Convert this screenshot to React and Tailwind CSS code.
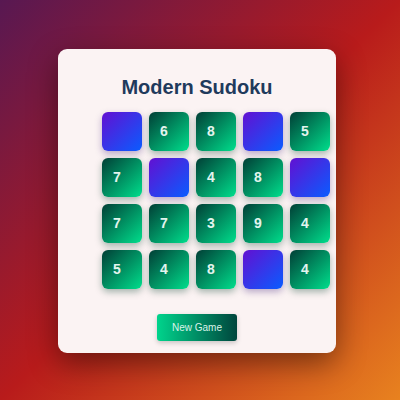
import React from "react";

const cells = [
  "", "6", "8", "", "5",
  "7", "", "4", "8", "",
  "7", "7", "3", "9", "4",
  "5", "4", "8", "", "4",
];

export default function App() {
  return (
    <div
      className="w-[400px] h-[400px] flex items-start justify-start bg-linear-to-br/srgb from-[#581852] via-[#b81b1b] to-[#e8821f]"
      style={{ fontFamily: '"Liberation Sans", Arial, sans-serif' }}
    >
      <div className="ml-[58px] mt-[49px] w-[278px] h-[304px] rounded-[9px] bg-[#fbf3f3] shadow-[0_10px_30px_rgba(0,0,0,0.45)] flex flex-col items-center pt-[24px]">
        <h1 className="text-[20px] leading-[28px] font-bold text-[#1f3a5c]">Modern Sudoku</h1>
        <div className="self-start ml-[44px] mt-[11px] grid grid-cols-[repeat(5,40px)] gap-x-[7px] gap-y-[7px]">
          {cells.map((v, i) =>
            v === "" ? (
              <div
                key={i}
                className="w-[40px] h-[39px] rounded-[6px] bg-linear-to-br/srgb from-[#6210d2] to-[#0a5cff] shadow-[0_3px_7px_rgba(60,30,120,0.35)]"
              />
            ) : (
              <div
                key={i}
                className="w-[40px] h-[39px] rounded-[6px] bg-linear-to-br/srgb from-[#013f36] to-[#00de8c] shadow-[0_3px_7px_rgba(0,60,40,0.35)] flex items-center justify-center pr-[10px] text-[14px] font-bold text-[#e3f4ee]"
              >
                {v}
              </div>
            )
          )}
        </div>
        <button className="mt-[25px] w-[80px] h-[27px] rounded-[3px] bg-linear-to-r/srgb from-[#00d48c] to-[#00463d] text-[10px] text-[#d8f3e8] shadow-[0_2px_5px_rgba(0,0,0,0.2)]">
          New Game
        </button>
      </div>
    </div>
  );
}
